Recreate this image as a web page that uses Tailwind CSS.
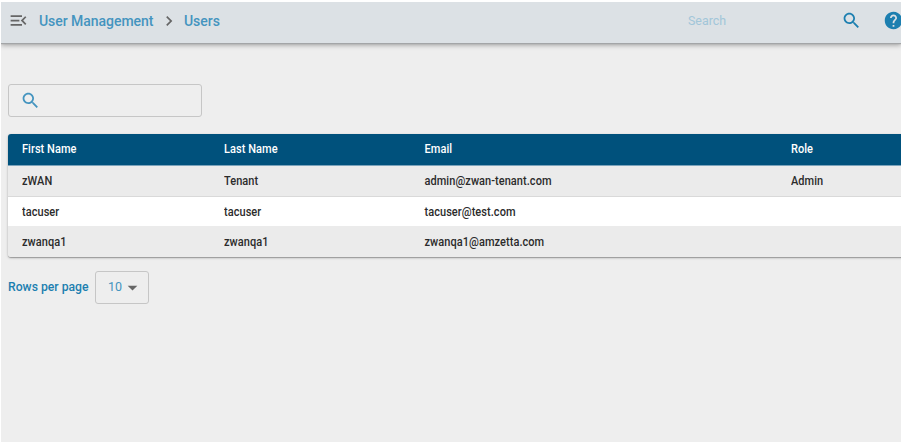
<!DOCTYPE html>
<html lang="en">
<head>
<meta charset="utf-8">
<title>Users</title>
<script src="https://cdn.jsdelivr.net/npm/@tailwindcss/browser@4"></script>
</head>
<body class="bg-white font-['Roboto',sans-serif] font-medium">
<div class="h-[442px] w-[901px] overflow-hidden pl-px pt-0.5">
  <div class="flex h-full flex-col overflow-hidden bg-[#eeeeee]">
    <header class="flex h-[41px] shrink-0 items-center bg-[#dce1e5] pb-[4px] shadow-[0_1px_1px_#a3a5a7,0_2px_5px_rgba(0,0,0,0.35)]">
      <svg class="ml-[7px] size-[21px] shrink-0 fill-[#666]" viewBox="0 0 24 24"><path d="M3 18h13v-2H3v2zM3 13h10v-2H3v2zm0-7v2h13V6H3zm18 9.590L17.420 12 21 8.410 19.590 7l-5 5 5 5L21 15.590z"/></svg>
      <a class="ml-[10px] w-[115px] whitespace-nowrap text-[14px] leading-5 tracking-[-0.04px] text-[#4494bf]">User Management</a>
      <svg class="ml-[5px] size-[20px] shrink-0 fill-[#666]" viewBox="0 0 24 24"><path d="M10 6 8.590 7.410 13.170 12l-4.580 4.590L10 18l6-6z"/></svg>
      <a class="ml-[5px] text-[14px] leading-5 tracking-[-0.04px] text-[#4494bf]">Users</a>
      <div class="ml-auto flex items-center">
        <span class="w-[153px] scale-y-[1.07] text-[12.4px] font-normal leading-5 text-[#a2c6d9]">Search</span>
        <svg class="mr-[21px] size-[21px] shrink-0 fill-[#1c7fb0]" viewBox="0 0 24 24"><path d="M15.500 14h-.79l-.28-.27C15.410 12.590 16 11.110 16 9.500 16 5.910 13.090 3 9.500 3S3 5.910 3 9.500 5.910 16 9.500 16c1.610 0 3.090-.59 4.230-1.570l.27.28v.79l5 4.990L20.490 19l-4.990-5zm-6 0C7.010 14 5 11.990 5 9.500S7.010 5 9.500 5 14 7.010 14 9.500 11.990 14 9.500 14z"/></svg>
        <svg class="-mr-[3px] size-[21px] shrink-0 fill-[#1c7fb0]" viewBox="0 0 24 24"><path d="M12 2C6.480 2 2 6.480 2 12s4.480 10 10 10 10-4.480 10-10S17.520 2 12 2zm1 17h-2v-2h2v2zm2.070-7.750-.9.920C13.450 12.900 13 13.500 13 15h-2v-.5c0-1.100.45-2.100 1.170-2.830l1.240-1.260c.37-.36.59-.86.590-1.410 0-1.100-.9-2-2-2s-2 .9-2 2H8c0-2.210 1.790-4 4-4s4 1.790 4 4c0 .88-.36 1.680-.93 2.250z"/></svg>
      </div>
    </header>
    <main class="pl-[7px] pt-[41px] text-[11px] leading-4 tracking-[0.05px] text-[#2b2b2b]">
      <div class="flex h-[33px] w-[194px] items-center rounded-[3px] border border-[#c6c6c6] pl-[11px]">
        <svg class="size-[21px] fill-[#4494bf]" viewBox="0 0 24 24"><path d="M15.500 14h-.79l-.28-.27C15.410 12.590 16 11.110 16 9.500 16 5.910 13.090 3 9.500 3S3 5.910 3 9.500 5.910 16 9.500 16c1.610 0 3.090-.59 4.230-1.570l.27.28v.79l5 4.990L20.490 19l-4.990-5zm-6 0C7.010 14 5 11.990 5 9.500S7.010 5 9.500 5 14 7.010 14 9.500 11.990 14 9.500 14z"/></svg>
      </div>
      <div class="mt-[17px] w-[920px] overflow-hidden rounded-[3px] shadow-[0_1px_1px_rgba(0,0,0,0.25),0_1px_3px_rgba(0,0,0,0.2)]">
        <div class="grid h-[31px] grid-cols-[202px_200.500px_366.500px_1fr] items-center bg-[#00517c] pl-[14px] text-white *:scale-y-[1.1]">
          <span>First Name</span><span>Last Name</span><span>Email</span><span>Role</span>
        </div>
        <div class="grid h-8 grid-cols-[202px_200.500px_366.500px_1fr] items-center border-y border-t-[#7ba3bb] border-b-[#d9d9d9] bg-[#ebebeb] pl-[14px] pt-[2px] *:scale-y-[1.1]">
          <span>zWAN</span><span>Tenant</span><span>admin@zwan-tenant.com</span><span>Admin</span>
        </div>
        <div class="grid h-[29px] grid-cols-[202px_200.500px_366.500px_1fr] items-center bg-white pl-[14px] pt-[2px] *:scale-y-[1.1]">
          <span>tacuser</span><span>tacuser</span><span>tacuser@test.com</span><span></span>
        </div>
        <div class="grid h-[31px] grid-cols-[202px_200.500px_366.500px_1fr] items-center bg-[#ebebeb] pl-[14px] pt-[3px] *:scale-y-[1.1]">
          <span>zwanqa1</span><span>zwanqa1</span><span>zwanqa1@amzetta.com</span><span></span>
        </div>
      </div>
      <div class="mt-3.5 flex items-center">
        <span class="w-[87px] scale-y-[1.07] whitespace-nowrap pb-px text-[12.200px] leading-5 tracking-normal text-[#1c7fb0]">Rows per page</span>
        <div class="flex h-[33px] w-[54px] items-center rounded-[3px] border border-[#c6c6c6] pl-3 text-[12.500px] font-normal leading-5 text-[#4494bf]"><span class="scale-y-[1.07] pb-px">10</span>
          <svg class="size-[21px] fill-[#666]" viewBox="0 0 24 24"><path d="m6.500 10 5.500 5.500 5.500-5.500z"/></svg>
        </div>
      </div>
    </main>
  </div>
</div>
</body>
</html>
